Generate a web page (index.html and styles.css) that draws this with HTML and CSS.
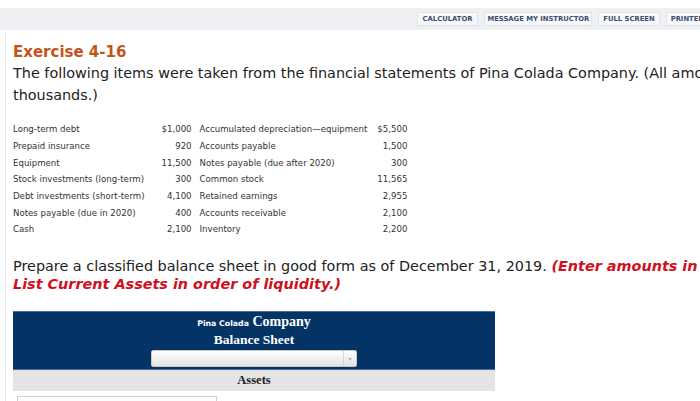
FILE: index.html
```html
<!DOCTYPE html>
<html>
<head>
<meta charset="utf-8">
<link rel="stylesheet" href="styles.css">
</head>
<body>
<div class="page">
  <div class="topbar">
    <span class="btn">CALCULATOR</span>
    <span class="btn btn-msg">MESSAGE MY INSTRUCTOR</span>
    <span class="btn">FULL SCREEN</span>
    <span class="btn">PRINTER VERSION</span>
  </div>
  <div class="panel">
    <h1 class="title">Exercise 4-16</h1>
    <p class="lead">The following items were taken from the financial statements of Pina Colada Company. (All amounts are in<br>thousands.)</p>
    <table class="items">
      <tr><td class="lbl">Long-term debt</td><td class="amt">$1,000</td><td class="lbl2">Accumulated depreciation—equipment</td><td class="amt">$5,500</td></tr>
      <tr><td class="lbl">Prepaid insurance</td><td class="amt">920</td><td class="lbl2">Accounts payable</td><td class="amt">1,500</td></tr>
      <tr><td class="lbl">Equipment</td><td class="amt">11,500</td><td class="lbl2">Notes payable (due after 2020)</td><td class="amt">300</td></tr>
      <tr><td class="lbl">Stock investments (long-term)</td><td class="amt">300</td><td class="lbl2">Common stock</td><td class="amt">11,565</td></tr>
      <tr><td class="lbl">Debt investments (short-term)</td><td class="amt">4,100</td><td class="lbl2">Retained earnings</td><td class="amt">2,955</td></tr>
      <tr><td class="lbl">Notes payable (due in 2020)</td><td class="amt">400</td><td class="lbl2">Accounts receivable</td><td class="amt">2,100</td></tr>
      <tr><td class="lbl">Cash</td><td class="amt">2,100</td><td class="lbl2">Inventory</td><td class="amt">2,200</td></tr>
    </table>
    <p class="lead prep">Prepare a classified balance sheet in good form as of December 31, 2019. <em class="red">(Enter amounts in thousands.</em><br><em class="red">List Current Assets in order of liquidity.)</em></p>
    <div class="sheet">
      <div class="head">
        <div class="co"><span class="co-name">Pina Colada</span> Company</div>
        <div class="bs">Balance Sheet</div>
        <div class="select"><span class="arrow">▾</span></div>
      </div>
      <div class="assets">Assets</div>
      <div class="row"><div class="input"></div></div>
    </div>
  </div>
</div>
</body>
</html>
```
FILE: styles.css
```css
html, body {
  margin: 0;
  padding: 0;
  background: #ffffff;
  overflow: hidden;
}
.page {
  width: 745px;
  font-family: "DejaVu Sans", Verdana, sans-serif;
  color: #222;
}
.topbar {
  margin-top: 8px;
  height: 22px;
  background: #eef0f3;
  display: flex;
  align-items: center;
  justify-content: flex-end;
  gap: 6px;
  box-sizing: border-box;
}
.btn {
  font-size: 6.8px;
  font-weight: bold;
  color: #3d4e70;
  background: #f7f8fa;
  border: 1px solid #dfe3ea;
  padding: 2px 4px;
  line-height: 8px;
  white-space: nowrap;
}
.btn:first-child {
  padding: 2px 5px;
}
.btn-msg {
  padding: 2px 2px;
}
.panel {
  margin-left: 5px;
  margin-top: 3px;
  border-left: 1px solid #e2e6ec;
  padding: 9px 7px 0 7px;
  background: #fff;
}
.title {
  margin: 0;
  font-size: 15px;
  font-weight: bold;
  color: #c4541c;
  line-height: 20px;
}
.lead {
  margin: 0;
  font-size: 14.4px;
  line-height: 22px;
  color: #222;
  white-space: nowrap;
}
.items {
  border-collapse: collapse;
  margin-top: 15px;
  font-size: 8.6px;
  color: #333;
}
.items td {
  padding: 0;
  height: 16.7px;
  line-height: 10px;
  white-space: nowrap;
}
.lbl { padding-right: 17px !important; }
.amt { text-align: right; }
.lbl2 { padding-left: 8px !important; padding-right: 10px !important; }
.prep {
  margin-top: 19px;
  line-height: 18px;
}
.red {
  color: #d0101e;
  font-weight: bold;
  font-style: italic;
}
.sheet {
  width: 482px;
  margin-top: 18px;
}
.head {
  background: #043466;
  border-top: 1px solid #4a6c96;
  border-bottom: 1px solid #4a6c96;
  color: #fff;
  text-align: center;
  padding: 2px 0 2px 0;
}
.co {
  font-family: "Liberation Serif", "Times New Roman", serif;
  font-weight: bold;
  font-size: 14px;
  line-height: 16px;
}
.co-name {
  font-family: "DejaVu Sans", Verdana, sans-serif;
  font-size: 7.8px;
}
.bs {
  font-family: "Liberation Serif", "Times New Roman", serif;
  font-weight: bold;
  font-size: 13.5px;
  line-height: 15px;
}
.select {
  width: 204px;
  height: 15px;
  margin: 3px auto 0 auto;
  background: linear-gradient(#ffffff, #e3e3e3);
  border: 1px solid #c8c8c8;
  border-radius: 2px;
  display: flex;
  justify-content: flex-end;
}
.arrow {
  width: 12px;
  border-left: 1px solid #d4d4d4;
  color: #aaa;
  font-size: 6px;
  line-height: 15px;
  text-align: center;
}
.assets {
  background: #e4e4e4;
  text-align: center;
  font-family: "Liberation Serif", "Times New Roman", serif;
  font-weight: bold;
  font-size: 12.5px;
  line-height: 21px;
  color: #222;
}
.row {
  padding: 5px 0 0 4px;
}
.input {
  width: 198px;
  height: 14px;
  border: 1px solid #cfcfcf;
  background: linear-gradient(#fff, #f0f0f0);
}
```
